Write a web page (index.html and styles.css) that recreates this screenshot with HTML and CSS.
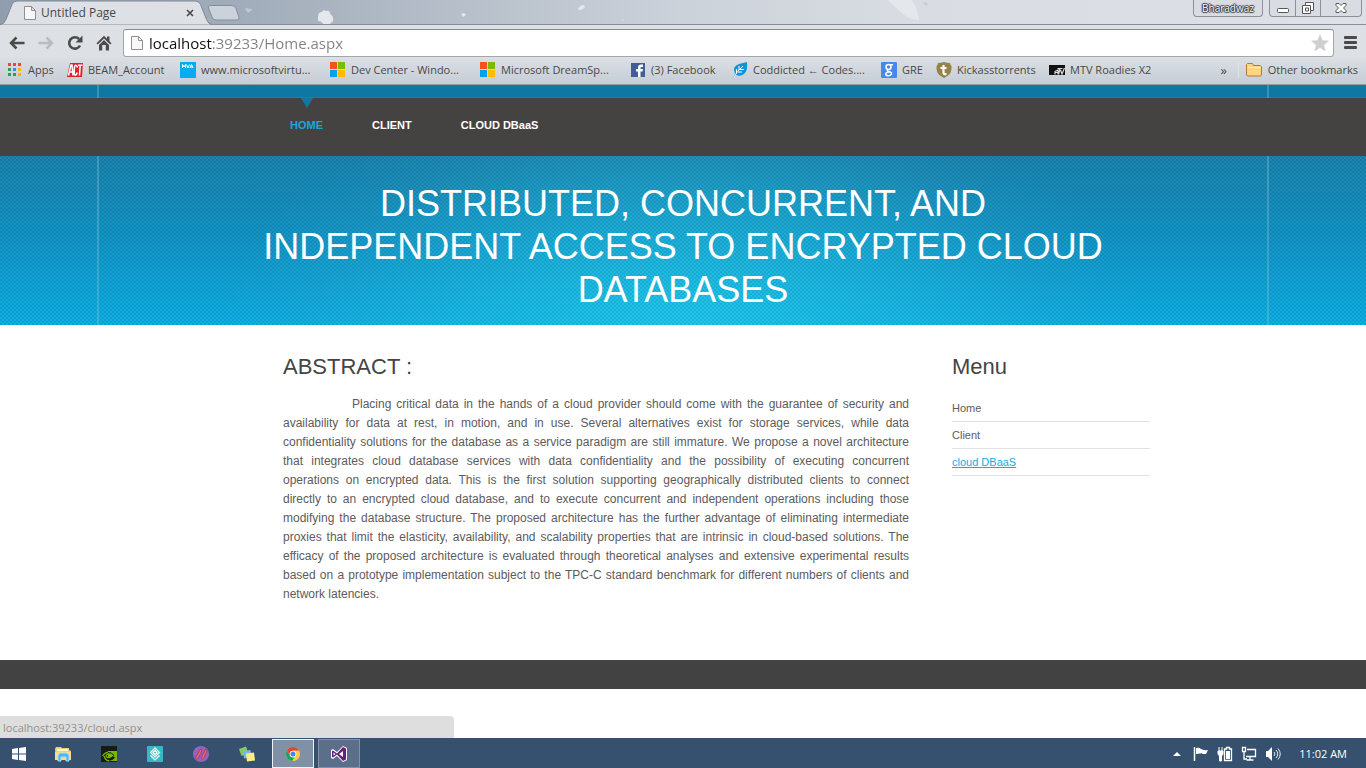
FILE: index.html
```html
<!DOCTYPE html>
<html lang="en">
<head>
<meta charset="utf-8">
<title>Untitled Page</title>
<link rel="stylesheet" href="styles.css">
</head>
<body>
<header class="browser">
  <div class="tabstrip">
    <svg class="theme" viewBox="0 0 1366 24" preserveAspectRatio="none" aria-hidden="true">
      <g fill="#e4e8ed">
        <path d="M318 17q0-5 4-5q1-3 4-1q4-1 4 3q4 2 3 7l-3 3h-7q-1-3-5-3z"/>
        <path d="M578 9q2-4 6-4l1 2q-3 4-6 3z"/>
        <path d="M461 14l3-1 2 2-3 2zM621 19l3 1-1 1z"/>
        <path d="M888 0h24q6 9 7 20q-10 0-17-7q-6-5-14-13z"/>
      </g>
      <path d="M245 9q2-2 4 0q3-1 3 1l-4 3z" fill="#bdc6d1"/>
      <path d="M923 3q3-2 5 1l-2 2z" fill="#c5ced3"/>
    </svg>
    <div class="tab">
      <svg class="tab-shape" viewBox="0 0 212 25" aria-hidden="true"><path d="M0 24.500q4 0 6-5l6-15q1-3.500 5-3.500h178q4 0 5.500 3.500l6 15q2 5 5.500 5" fill="#dde1e6" stroke="#818995"/></svg>
      <svg class="page-icon" viewBox="0 0 12 14" aria-hidden="true"><path d="M.5.500h7l4 4v9h-11zM7.500.500v4h4" fill="#f7f7f7" stroke="#909090"/></svg>
      <span class="tab-title">Untitled Page</span>
      <button class="tab-close" aria-label="Close tab"><svg viewBox="0 0 8 8"><path d="M1 1l6 6M7 1l-6 6" stroke="#484848" stroke-width="1.600"/></svg></button>
    </div>
    <button class="new-tab" aria-label="New tab"><svg viewBox="0 0 33 16"><path d="M3 .5h22q3 0 4 3l3 9q.5 2.500-2 2.500H9q-3 0-4-3L1.500 3Q1 .5 3 .5z" fill="#ccd2dc" stroke="#858e9c"/></svg></button>
    <div class="window-tools">
      <button class="profile">Bharadwaz</button>
      <div class="window-buttons">
        <button aria-label="Minimize"><svg viewBox="0 0 14 14"><rect x="1.500" y="7.500" width="11" height="4" rx="1" fill="#fff" stroke="#555"/></svg></button>
        <button aria-label="Restore"><svg viewBox="0 0 14 14"><path d="M4.500 1.500h8v8h-3v3h-8v-8h3z" fill="#fff" stroke="#555"/><path d="M4.500 4.500h5v5M4.500 7h3v3h-3z" fill="none" stroke="#555"/></svg></button>
        <button aria-label="Close"><svg viewBox="0 0 14 14"><path d="M2 2.500h3l2 2 2-2h3v2l-2.500 2.500 2.500 2.500v2h-3l-2-2-2 2H2v-2L4.500 7 2 4.500z" fill="#fff" stroke="#555"/></svg></button>
      </div>
    </div>
  </div>
  <div class="toolbar">
    <button class="tool" aria-label="Back"><svg viewBox="0 0 16 16"><path d="M7.500 2.500L2 8l5.500 5.500M2 8h13.500" fill="none" stroke="#4b4b4b" stroke-width="2.500"/></svg></button>
    <button class="tool" aria-label="Forward" disabled><svg viewBox="0 0 16 16"><path d="M8.500 2.500L14 8l-5.500 5.500M14 8H.5" fill="none" stroke="#b9bcc1" stroke-width="2.500"/></svg></button>
    <button class="tool" aria-label="Reload"><svg viewBox="0 0 16 16"><path d="M13 10.500A5.700 5.700 0 1 1 12 4" fill="none" stroke="#4b4b4b" stroke-width="2.600"/><path d="M15.500.5v7h-7z" fill="#4b4b4b"/></svg></button>
    <button class="tool" aria-label="Home"><svg viewBox="0 0 16 16"><path d="M8 .8l3 3V1.500h2.500v4.800L15.500 8.300l-1.300 1.300L8 3.500 1.800 9.600.5 8.300z" fill="#4b4b4b"/><path d="M3 10l5-5 5 5v5.500H9.800V10H6.200v5.500H3z" fill="#4b4b4b"/></svg></button>
    <form class="omnibox">
      <svg class="page-icon" viewBox="0 0 12 14" aria-hidden="true"><path d="M.5.500h7l4 4v9h-11zM7.500.500v4h4" fill="#f7f7f7" stroke="#909090"/></svg>
      <input class="address" type="text" aria-label="Address" value="localhost:39233/Home.aspx">
      <button type="button" class="tool" aria-label="Bookmark this page"><svg viewBox="0 0 18 18"><path d="M9 0l2.500 6.300 6.500.4-5 4.200 1.700 6.600L9 13.800l-5.700 3.700L5 10.900 0 6.700l6.500-.4z" fill="#cfcfcf"/></svg></button>
    </form>
    <button class="menu-button" aria-label="Menu"><span></span><span></span><span></span></button>
  </div>
  <nav class="bookmarks" aria-label="Bookmarks">
    <div class="bookmark-list">
      <a href="#"><svg viewBox="0 0 16 16"><path d="M1 1h3v3H1zM6 1h3v3H6zM11 1h3v3h-3z" fill="#e8453c"/><path d="M1 6h3v3H1z" fill="#2aa05c"/><path d="M6 6h3v3H6z" fill="#4285f4"/><path d="M11 6h3v3h-3z" fill="#f9b60b"/><path d="M1 11h3v3H1zM6 11h3v3H6z" fill="#2aa05c"/><path d="M11 11h3v3h-3z" fill="#f9b60b"/></svg>Apps</a>
      <a href="#"><svg viewBox="0 0 16 16"><path d="M3 1h13l-1 14H0z" fill="#e5202a"/><path d="M1.500 13.500L4 3h1l1 10.500M2.500 10H6M10.500 5.500Q10 3 8.500 3.200 7.500 3.500 7.200 8q-.2 5 1 5 1.500 0 2-2.500M11 3.200h4.500M13.200 3.200l-.7 10.300" fill="none" stroke="#fff" stroke-width="1.500"/></svg>BEAM_Account</a>
      <a href="#"><svg viewBox="0 0 16 16"><path d="M0 0h16v16H0z" fill="#00aeef"/><path d="M2.500 6V2.500L4 5l1.500-2.500V6M6.500 2.500L8 6l1.500-3.500M10 6l1.500-3.500L13 6M10.500 5h2" fill="none" stroke="#fff"/></svg>www.microsoftvirtu...</a>
      <a href="#"><svg viewBox="0 0 16 16"><path d="M0 0h7v7H0z" fill="#f65314"/><path d="M8 0h7v7H8z" fill="#7cbb00"/><path d="M0 8h7v7H0z" fill="#00a1f1"/><path d="M8 8h7v7H8z" fill="#ffbb00"/></svg>Dev Center - Windo...</a>
      <a href="#"><svg viewBox="0 0 16 16"><path d="M0 0h7v7H0z" fill="#f65314"/><path d="M8 0h7v7H8z" fill="#7cbb00"/><path d="M0 8h7v7H0z" fill="#00a1f1"/><path d="M8 8h7v7H8z" fill="#ffbb00"/></svg>Microsoft DreamSp...</a>
      <a href="#"><svg viewBox="0 0 16 16"><path d="M1 1h14v14H1z" fill="#435c9c"/><path d="M8 15V9.500H6V7h2V5.500Q8 2.500 11 2.500h2V5h-1.500q-1 0-1 1v1H13l-.4 2.500h-2.100V15z" fill="#fff"/></svg>(3) Facebook</a>
      <a href="#"><svg viewBox="0 0 16 16"><path d="M15 0q1 9-3 12-4 3-8 1l-3 2.500L3 12Q0 4 7 2z" fill="#0a96dc"/><path d="M2 15Q5 9 11 4M7 4v4M4.500 7v4M6 10h4M8 7.500h4" fill="none" stroke="#fff"/></svg>Coddicted ← Codes....</a>
      <a href="#"><svg viewBox="0 0 16 16"><rect width="16" height="16" rx="1" fill="#4787ee"/><g fill="none" stroke="#fff" stroke-width="1.500"><ellipse cx="7.500" cy="5" rx="2.500" ry="2.500"/><path d="M9 2.800h3M7 7.500q-1.500 1 .5 1.800Q11 10.500 10.500 12 9.500 14 7 13.800 4.500 13.500 4.700 11.500 5.500 10 8 10"/></g></svg>GRE</a>
      <a href="#"><svg viewBox="0 0 16 16"><path d="M2 1q3 0 6-1 3 1 6 1 0 2 1.500 3Q16 11 12 13.500L8 16 4 13.500Q0 11 .5 4 2 3 2 1z" fill="#96834a"/><path d="M7.500 3v8q0 1.500 3 1M4.500 6h6" fill="none" stroke="#fff" stroke-width="2.200"/></svg>Kickasstorrents</a>
      <a href="#"><svg viewBox="0 0 16 16"><path d="M0 3h16v10H0z" fill="#111"/><path d="M6 12.500V9.500l3-1.500v4.500M6.500 10.500h2M8.500 6.500h5M11 6.500l-1.500 6M11.500 8l1.500 4 2.500-6" fill="none" stroke="#ddd" stroke-width="1.200"/></svg>MTV Roadies X2</a>
    </div>
    <button class="overflow" aria-label="More bookmarks">»</button>
    <a class="other" href="#"><svg viewBox="0 0 16 16"><path d="M.5 4V2.500l1-1h5l1 2h7l1 1v8.500l-1 1h-13l-1-1z" fill="#ffd583" stroke="#b27a38"/><path d="M1.500 5.500h13" stroke="#ffeec5"/></svg>Other bookmarks</a>
  </nav>
</header>

<main class="page">
  <div class="masthead">
    <div class="topline"></div>
    <nav class="site-nav" aria-label="Site">
      <ul class="container">
        <li><a class="active" href="#">HOME</a></li>
        <li><a href="#">CLIENT</a></li>
        <li><a href="#">CLOUD DBaaS</a></li>
      </ul>
    </nav>
    <div class="hero">
      <h1>DISTRIBUTED, CONCURRENT, AND INDEPENDENT ACCESS TO ENCRYPTED CLOUD DATABASES</h1>
    </div>
  </div>
  <div class="content container">
    <article class="abstract">
      <h2>ABSTRACT :</h2>
      <p>Placing critical data in the hands of a cloud provider should come with the guarantee of security and availability for data at rest, in motion, and in use. Several alternatives exist for storage services, while data confidentiality solutions for the database as a service paradigm are still immature. We propose a novel architecture that integrates cloud database services with data confidentiality and the possibility of executing concurrent operations&nbsp;on encrypted data. This is the first solution supporting geographically distributed clients to connect directly&nbsp;to&nbsp;an&nbsp;encrypted cloud database, and to execute concurrent and independent operations including those modifying&nbsp;the&nbsp;database structure. The proposed architecture has the further advantage of eliminating intermediate proxies&nbsp;that&nbsp;limit&nbsp;the elasticity, availability, and scalability properties that are intrinsic in cloud-based solutions. The efficacy&nbsp;of&nbsp;the&nbsp;proposed architecture is evaluated through theoretical analyses and extensive experimental results based&nbsp;on&nbsp;a&nbsp;prototype implementation subject to the TPC-C standard benchmark for different numbers of clients and network&nbsp;latencies.</p>
    </article>
    <aside class="sidebar">
      <h2>Menu</h2>
      <ul>
        <li><a href="#">Home</a></li>
        <li><a href="#">Client</a></li>
        <li><a class="hovered" href="#">cloud DBaaS</a></li>
      </ul>
    </aside>
  </div>
  <footer class="site-footer"></footer>
  <div class="status">localhost:39233/cloud.aspx</div>
</main>

<footer class="taskbar">
  <button class="start" aria-label="Start"><svg viewBox="0 0 14 14"><path d="M0 2l6-.9v5.400H0zM7 1l7-1v6.500H7zM0 7.500h6v5.400L0 12zM7 7.500h7V14l-7-1z" fill="#fff"/></svg></button>
  <div class="apps">
    <button aria-label="File Explorer"><svg viewBox="0 0 16 16"><path d="M0 3l1-2h5l1 1h7v2l2 1-1 9H1z" fill="#eed07b"/><path d="M2 3h11v2H2z" fill="#fff6ce"/><path d="M0 6h16v8H0z" fill="#f6dd91"/><path d="M3 15V9l2-2h7l2 2v6h-3v-4H6v4z" fill="#55b7e8" stroke="#a9def6"/></svg></button>
    <button aria-label="NVIDIA"><svg viewBox="0 0 16 16"><path d="M0 0h16v16H0z" fill="#171a18"/><path d="M7 5h9v10H7q5-.5 7-3.500l-2-1.500q-2 2.500-5 2z" fill="#76b900"/><path d="M1.500 10Q5 5 10 6.500L13 9M3 10q1 4 5 5M5 10q2-3.500 5-1.500L8 11.500Q6 12 5 10z" fill="none" stroke="#76b900" stroke-width="1.300"/><path d="M7 6.500q4 0 6 3" fill="none" stroke="#171a18"/></svg></button>
    <button aria-label="Layers"><svg viewBox="0 0 16 16"><rect width="16" height="16" rx="1" fill="#38b8c5"/><path d="M8 2l4.500 4.500L8 11 3.500 6.500zM8 4.500l2 2-2 2-2-2zM3.500 9.500L8 14l4.500-4.500" fill="none" stroke="#fff" stroke-width="1.200"/></svg></button>
    <button aria-label="Media"><svg viewBox="0 0 16 16"><circle cx="8" cy="8" r="8" fill="#9562bd"/><path d="M2.500 12L7 3.500q2-1.500 2 1L5.500 12q-2 2.500-3 0zM8 12l4.500-8.500q2-1 1.500 1.500L11 12q-2 2.500-3 0z" fill="#f4605f" stroke="#7c3268" stroke-width=".6"/></svg></button>
    <button aria-label="Notes"><svg viewBox="0 0 16 16"><path d="M0 3l7-2.500 2.500 7-7 2.500z" fill="#83cd5e"/><path d="M4 5l7.500-1 1 7.500-7.500 1z" fill="#76b7e8"/><path d="M7 7.500l8-1 1 8-8 1z" fill="#ffec89"/></svg></button>
    <button class="running current" aria-label="Chrome"><svg viewBox="0 0 16 16"><circle cx="8" cy="8" r="7" fill="#ffcd40"/><path d="M1.900 4.500a7 7 0 0 1 12.200 0H8L5 10z" fill="#e44335"/><path d="M1.900 4.500L5 10l4 2-2 3A7 7 0 0 1 1.900 4.500z" fill="#1da260"/><circle cx="8" cy="8" r="3.300" fill="#fff"/><circle cx="8" cy="8" r="2.500" fill="#4587ed"/></svg></button>
    <button class="running" aria-label="Visual Studio"><svg viewBox="0 0 16 16"><path d="M0 4l2-1 4 3 6-6 4 2v12l-4 2-6-6-4 3-2-1z" fill="#fff"/><path d="M1 5l1-.5L6 7.500 12 1l3 1.500v11L12 15 6 8.500l-4 3L1 11z" fill="#68217a"/><path d="M2.500 6.500v3L4.500 8zM12 5v6L8 8z" fill="#fff"/></svg></button>
  </div>
  <div class="tray">
    <button aria-label="Show hidden icons"><svg viewBox="0 0 16 16"><path d="M4 10l4-4 4 4z" fill="#fff"/></svg></button>
    <button aria-label="Action center"><svg viewBox="0 0 16 16"><path d="M1.500 1v14" stroke="#fff" stroke-width="1.500"/><path d="M3 2q3-1 5 1 2 1.500 7 1l-2 4H10Q9 7 7 7.500L3 8z" fill="#fff"/></svg></button>
    <button aria-label="Battery"><svg viewBox="0 0 16 16"><path d="M1 5h5v3L4.500 10v5h-2v-5L1 8zM2 1v4M5 1v4" fill="#fff" stroke="#fff"/><path d="M7.500 3h2V1.500h3V3h2v11.500h-7z" fill="none" stroke="#fff" stroke-width="1.300"/><path d="M9 5h4v8H9z" fill="#fff"/></svg></button>
    <button aria-label="Network"><svg viewBox="0 0 16 16"><path d="M6 3.500h8.500v7H5M9 10.500v3M5.500 14h7M1.500 1.500h3v4h-3zM3 5.500V13h3" fill="none" stroke="#fff" stroke-width="1.300"/></svg></button>
    <button aria-label="Volume"><svg viewBox="0 0 16 16"><path d="M1 5h2l4-4v14l-4-4H1z" fill="#fff"/><path d="M9 6q2 2 0 4M11 4q3.500 4 0 8M13 2.500q4.500 5.500 0 11" fill="none" stroke="#e3e9ef"/></svg></button>
    <time class="clock">11:02 AM</time>
  </div>
</footer>
</body>
</html>
```
FILE: styles.css
```css
*, *::before, *::after { box-sizing: border-box; }
body {
  margin: 0;
  min-height: 100vh;
  display: flex;
  flex-direction: column;
  font-family: "Liberation Sans", Arial, sans-serif;
  font-size: 12px;
  background: #fff;
}
button {
  border: 0;
  padding: 0;
  background: none;
  font: inherit;
  color: inherit;
  display: flex;
  align-items: center;
  justify-content: center;
}
svg { display: block; flex: none; }
ul { list-style: none; margin: 0; padding: 0; }
a { color: inherit; text-decoration: none; }

/* Browser frame */
.browser { font-family: "Open Sans", "Noto Sans", sans-serif; }
.tabstrip {
  position: relative;
  display: flex;
  align-items: flex-start;
  height: 25px;
  border-bottom: 1px solid #888e97;
  background: linear-gradient(90deg, #8f9dae, #a2adbb 18%, #b4bdc8 32%, #ccd2da 50%, #d9dde3 68%, #dde0e6);
}
.theme { position: absolute; inset: 0; width: 100%; height: 24px; }
.tab {
  position: relative;
  display: flex;
  align-items: center;
  width: 212px;
  height: 25px;
  padding: 1px 17px 0 24px;
  color: #484848;
}
.tab-shape { position: absolute; left: 0; top: 0; width: 212px; height: 25px; }
.page-icon { position: relative; width: 12px; height: 14px; }
.tab-title { position: relative; flex: 1; padding-left: 5px; font-size: 12px; line-height: 16px; }
.tab-close { position: relative; width: 10px; height: 10px; }
.tab-close svg { width: 8px; height: 8px; }
.new-tab { position: relative; margin: 5px 0 0 -5px; }
.new-tab svg { width: 33px; height: 16px; }
.window-tools { position: relative; display: flex; gap: 6px; margin-left: auto; padding-right: 4px; }
.profile, .window-buttons {
  height: 17px;
  border: 1px solid #8c9199;
  border-top: 0;
  border-radius: 0 0 4px 4px;
  background: #d9dce2;
}
.profile {
  width: 70px;
  color: #fff;
  font-size: 10px;
  text-shadow: 0 0 1px #333, 1px 0 1px #333, -1px 0 1px #333, 0 1px 1px #333, 0 -1px 1px #333;
}
.window-buttons { display: flex; }
.window-buttons button { width: 25px; }
.window-buttons button:last-child { width: 41px; }
.window-buttons button + button { border-left: 1px solid #8c9199; }
.window-buttons svg { width: 14px; height: 14px; }
.toolbar {
  display: flex;
  align-items: center;
  gap: 13px;
  height: 33px;
  padding: 2px 9px 0 9px;
  background: #dde1e6;
}
.tool svg { width: 16px; height: 16px; }
.omnibox {
  flex: 1;
  display: flex;
  align-items: center;
  height: 28px;
  margin: 0 -4px 0 -2px;
  padding: 0 4px 0 7px;
  border: 1px solid #a3a7ac;
  border-top-color: #878c92;
  border-radius: 3px;
  background: #fff;
}
.omnibox .tool svg { width: 18px; height: 18px; }
.address {
  flex: 1;
  min-width: 0;
  padding: 0;
  border: 0;
  margin-left: 6px;
  font: 15px "Open Sans", "Noto Sans", sans-serif;
  color: transparent;
  background: linear-gradient(90deg, #111 63px, #808080 63px);
  -webkit-background-clip: text;
  background-clip: text;
}
.menu-button { flex-direction: column; gap: 2px; width: 14px; }
.menu-button span { width: 13px; height: 3px; border-radius: 1px; background: #4b4b4b; }
.bookmarks {
  display: flex;
  align-items: center;
  height: 27px;
  padding: 0 8px 2px 7px;
  border-bottom: 1px solid #9a9c9f;
  background: linear-gradient(#dbdfe4, #c6cdd5);
  color: #484848;
  font-size: 11px;
  line-height: 16px;
}
.bookmark-list {
  flex: 1;
  display: grid;
  grid-template-columns: 60px 113px 150px 150px 150px 102px 149px 55px 113px 1fr;
}
.bookmarks a { display: flex; align-items: center; gap: 5px; white-space: nowrap; }
.bookmarks svg { width: 16px; height: 16px; }
.overflow { width: 20px; margin-right: 4px; font-size: 13px; }
.bookmarks .other { padding-left: 7px; gap: 6px; border-left: 1px solid #dfe3e8; }

/* Web page */
.page {
  position: relative;
  flex: 1;
  display: flex;
  flex-direction: column;
  color: #5d5b5b;
}
.container { width: 100%; max-width: 934px; margin: 0 auto; }
.masthead {
  position: relative;
  background:
    repeating-conic-gradient(rgba(0, 60, 100, .12) 0 25%, rgba(120, 200, 225, .08) 0 50%) 0 0 / 4px 4px,
    radial-gradient(ellipse 460px 250px at 50% 100%, rgba(35, 210, 240, .7), rgba(40, 205, 235, .38) 45%, rgba(60, 180, 210, .12) 80%, rgba(60, 180, 210, 0)),
    linear-gradient(#1680aa 30%, #0e91c2 62%, #0aaee3);
}
.masthead::before {
  content: "";
  position: absolute;
  inset: 0;
  max-width: 1172px;
  margin: 0 auto;
  border: 2px solid rgba(130, 185, 205, .4);
  border-width: 0 2px;
}
.topline { height: 13px; background: #0e78a3; border-bottom: 1px solid #237f9f; }
.site-nav { position: relative; background: #454242; height: 58px; }
.site-nav ul { display: flex; gap: 49px; padding: 0 74px; }
.site-nav a { position: relative; display: block; padding: 19px 0; line-height: 16px; font-size: 11px; font-weight: bold; color: #fff; }
.site-nav .active { color: #1ba5dc; }
.site-nav .active::before {
  content: "";
  position: absolute;
  top: 0;
  left: calc(50% - 6px);
  border: 6px solid transparent;
  border-width: 10px 6px 0;
  border-top-color: #0e78a3;
}
.hero { position: relative; padding: 26px 0 14px; }
h1 {
  max-width: 860px;
  margin: 0 auto;
  font-size: 36px;
  font-weight: normal;
  line-height: 43px;
  text-align: center;
  color: #fff;
}
.content { display: flex; gap: 43px; padding: 28px 0 56px 67px; }
h2 { margin: 0; font-size: 22px; font-weight: normal; line-height: 28px; color: #444; }
.abstract { flex: 1; }
.abstract p { margin: 14px 0 0; line-height: 19px; text-align: justify; text-indent: 69px; }
.sidebar { width: 198px; }
.sidebar ul { padding-top: 14px; font-size: 11px; line-height: 16px; }
.sidebar li { padding: 5px 0; border-bottom: 1px solid #e1e1e1; }
.sidebar .hovered { color: #10ade4; text-decoration: underline; }
.site-footer { height: 29px; background: #424242; }
.status {
  position: absolute;
  left: 0;
  bottom: 0;
  width: 454px;
  height: 22px;
  padding-left: 3px;
  border-radius: 0 4px 0 0;
  background: #dedede;
  color: #909090;
  font: 11px/23px "Open Sans", "Noto Sans", sans-serif;
}

/* Taskbar */
.taskbar {
  display: flex;
  align-items: stretch;
  height: 30px;
  padding: 1px 19px 0 12px;
  background: #36516f;
  color: #fff;
  font-family: "Open Sans", "Noto Sans", sans-serif;
}
.start { width: 14px; margin-right: 16px; }
.start svg { width: 14px; height: 14px; }
.apps { display: flex; gap: 4px; }
.apps button { width: 42px; }
.apps svg { width: 16px; height: 16px; }
.apps .running { border: 1px solid #8292a8; background: #5b6f8a; }
.apps .current { border-color: #eef1f5; background: #8191a5; }
.tray { display: flex; gap: 8px; align-items: center; margin-left: auto; }
.tray svg { width: 16px; height: 16px; }
.clock { margin-left: 10px; font-size: 11px; }
```
